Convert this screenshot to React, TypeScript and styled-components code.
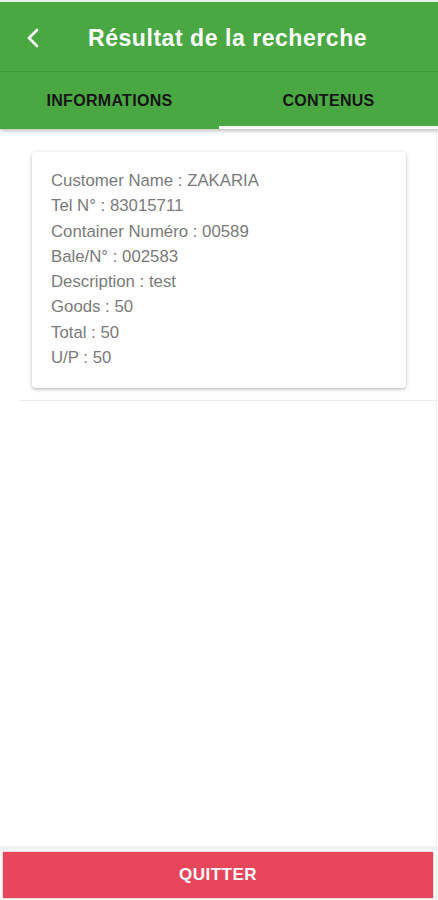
import React from "react";
import styled, { createGlobalStyle } from "styled-components";

const GlobalStyle = createGlobalStyle`
  html, body {
    margin: 0;
    padding: 0;
    background: #ffffff;
  }
  body {
    font-family: "Liberation Sans", Arial, sans-serif;
  }
`;

const rows = [
  "Customer Name : ZAKARIA",
  "Tel N° : 83015711",
  "Container Numéro : 00589",
  "Bale/N° : 002583",
  "Description : test",
  "Goods : 50",
  "Total : 50",
  "U/P : 50",
];

export default function App() {
  return (
    <>
      <GlobalStyle />
      <Screen>
        <Header>
          <TopBar>
            <BackButton aria-label="retour">
              <svg width="14" height="20" viewBox="0 0 14 20">
                <polyline
                  points="11,2 3,10 11,18"
                  fill="none"
                  stroke="#fff"
                  strokeWidth="2.6"
                  strokeLinecap="round"
                  strokeLinejoin="round"
                />
              </svg>
            </BackButton>
            <Title>Résultat de la recherche</Title>
          </TopBar>
          <Tabs>
            <Tab $active={false}>INFORMATIONS</Tab>
            <Tab $active>CONTENUS</Tab>
          </Tabs>
        </Header>

        <Content>
          <ListItem>
            <Card>
              {rows.map((r) => (
                <Line key={r}>{r}</Line>
              ))}
            </Card>
          </ListItem>
        </Content>

        <Footer>
          <QuitButton>QUITTER</QuitButton>
        </Footer>
      </Screen>
    </>
  );
}

const Screen = styled.div`
  width: 438px;
  height: 900px;
  display: flex;
  flex-direction: column;
  background: #fff;
  overflow: hidden;
`;

const Header = styled.div`
  background: #4aa843;
  border-top: 2px solid #e9eee8;
  box-shadow: 0 2px 4px rgba(0, 0, 0, 0.25);
  position: relative;
  z-index: 1;
`;

const TopBar = styled.div`
  height: 69px;
  display: flex;
  align-items: center;
  border-bottom: 1px solid #3f963a;
`;

const BackButton = styled.div`
  width: 88px;
  padding-left: 26px;
  padding-top: 2px;
  box-sizing: border-box;
  display: flex;
  align-items: center;
  height: 100%;
`;

const Title = styled.div`
  color: #fff;
  font-size: 23px;
  font-weight: 700;
  letter-spacing: 0.55px;
  padding-top: 3px;
`;

const Tabs = styled.div`
  display: flex;
  height: 57px;
`;

const Tab = styled.div<{ $active: boolean }>`
  flex: 1;
  display: flex;
  align-items: center;
  justify-content: center;
  box-sizing: border-box;
  padding-top: 3px;
  font-size: 16px;
  font-weight: 700;
  color: #151515;
  letter-spacing: 0.3px;
  border-bottom: 3px solid ${({ $active }) => ($active ? "#ffffff" : "transparent")};
`;

const Content = styled.div`
  flex: 1;
  border-right: 1px solid #efefef;
  margin-right: 1px;
`;

const ListItem = styled.div`
  margin-left: 20px;
  padding: 23px 30px 12px 12px;
  border-bottom: 1px solid #eaeaea;
`;

const Card = styled.div`
  background: #fff;
  border-radius: 4px;
  box-shadow: 0 1px 4px rgba(0, 0, 0, 0.22), 0 2px 2px rgba(0, 0, 0, 0.08);
  padding: 16px 20px 18px 19px;
`;

const Line = styled.div`
  font-size: 16.8px;
  line-height: 25.3px;
  color: #7a7a7a;
`;

const Footer = styled.div`
  border-top: 4px solid #f2f2f2;
  padding: 2px 3px 2px 3px;
  border-right: 1px solid #efefef;
  margin-right: 1px;
`;

const QuitButton = styled.div`
  height: 46px;
  background: #e8465b;
  box-shadow: 0 0 2px rgba(120, 20, 30, 0.45);
  display: flex;
  align-items: center;
  justify-content: center;
  color: #fff;
  font-size: 17px;
  font-weight: 700;
  letter-spacing: 0.5px;
`;
